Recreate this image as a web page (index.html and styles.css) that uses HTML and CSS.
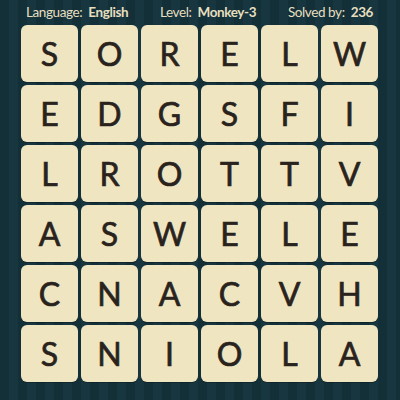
FILE: index.html
```html
<!DOCTYPE html>
<html>
<head>
<meta charset="utf-8">
<link rel="stylesheet" href="styles.css">
</head>
<body>
<div class="page">
  <div class="header">
    <span class="item">Language: <b>English</b></span>
    <span class="item">Level: <b>Monkey-3</b></span>
    <span class="item">Solved by: <b>236</b></span>
  </div>
  <div class="grid">
    <div class="tile">S</div><div class="tile">O</div><div class="tile">R</div><div class="tile">E</div><div class="tile">L</div><div class="tile">W</div>
    <div class="tile">E</div><div class="tile">D</div><div class="tile">G</div><div class="tile">S</div><div class="tile">F</div><div class="tile">I</div>
    <div class="tile">L</div><div class="tile">R</div><div class="tile">O</div><div class="tile">T</div><div class="tile">T</div><div class="tile">V</div>
    <div class="tile">A</div><div class="tile">S</div><div class="tile">W</div><div class="tile">E</div><div class="tile">L</div><div class="tile">E</div>
    <div class="tile">C</div><div class="tile">N</div><div class="tile">A</div><div class="tile">C</div><div class="tile">V</div><div class="tile">H</div>
    <div class="tile">S</div><div class="tile">N</div><div class="tile">I</div><div class="tile">O</div><div class="tile">L</div><div class="tile">A</div>
  </div>
</div>
</body>
</html>
```
FILE: styles.css
```css
html, body {
  margin: 0;
  padding: 0;
}
body {
  width: 400px;
  height: 400px;
  overflow: hidden;
  background-color: #133039;
  background-image: repeating-linear-gradient(90deg, #133039 0px, #133039 9px, #17363f 9px, #17363f 18px);
  font-family: "Lato", "DejaVu Sans", sans-serif;
}
.page {
  display: flex;
  flex-direction: column;
}
.header {
  display: flex;
  justify-content: space-between;
  align-items: center;
  height: 24px;
  padding: 0 27px 0 26px;
  color: #e6dfbf;
  font-size: 13.5px;
  letter-spacing: -0.4px;
}
.header b {
  font-weight: 700;
  margin-left: 3px;
}
.grid {
  display: grid;
  grid-template-columns: repeat(6, 57px);
  grid-auto-rows: 57px;
  gap: 3px;
  margin: 1px 0 0 21px;
}
.tile {
  background: #efe6c1;
  border-radius: 6px;
  display: flex;
  align-items: center;
  justify-content: center;
  color: #2a231d;
  font-size: 32px;
  font-weight: 400;
  -webkit-text-stroke: 0.7px #2a231d;
  box-shadow: 0 1px 0 rgba(0,0,0,0.25);
}
```
